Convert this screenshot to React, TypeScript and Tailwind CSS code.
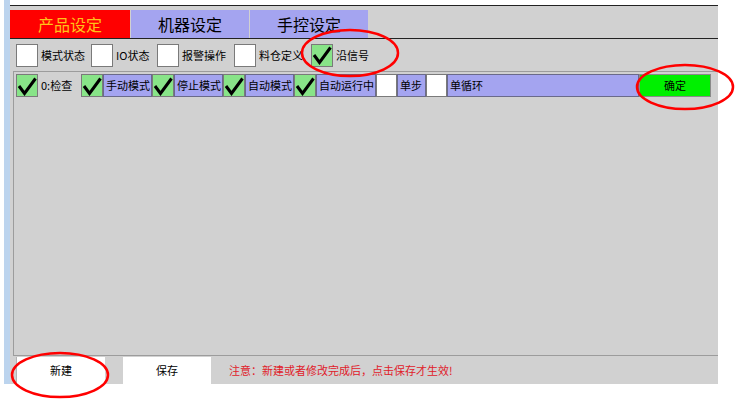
import React from "react";

const font = { fontFamily: '"Noto Sans CJK SC", "Noto Sans", sans-serif' };

function Check({ checked, w = "w-[22px]", bg = "bg-[#88e488]" }: { checked: boolean; w?: string; bg?: string }) {
  return (
    <div className={`${w} h-[23px] shrink-0 border border-[#7a7a7a] ${checked ? bg : "bg-white"} flex items-center justify-center`}>
      {checked && (
        <svg width="20" height="20" viewBox="0 0 20 20">
          <polyline points="2,10 7.5,17.5 18.5,2.5" fill="none" stroke="#000" strokeWidth="3" strokeLinejoin="miter" />
        </svg>
      )}
    </div>
  );
}

function Label({ text, w }: { text: string; w: string }) {
  return (
    <div className={`${w} h-[23px] shrink-0 border border-[#6a6a8a] bg-[#a4a4f0] flex items-center pl-[2px] text-[11px] text-black leading-none whitespace-nowrap overflow-hidden`}>
      {text}
    </div>
  );
}

export default function App() {
  const topItems = [
    { label: "模式状态", w: "w-[75px]", checked: false },
    { label: "IO状态", w: "w-[66px]", checked: false },
    { label: "报警操作", w: "w-[77px]", checked: false },
    { label: "料仓定义", w: "w-[77px]", checked: false },
    { label: "沿信号", w: "w-[80px]", checked: true },
  ];
  return (
    <div className="relative w-[737px] h-[402px] bg-white overflow-hidden" style={font}>
      <div className="flex h-[384px] pl-[4px]">
        <div className="w-[6px] bg-[#bcd4ee]" />
        <div className="flex w-[708px] flex-col">
          <div className="h-[5px] bg-white" />
          <div className="flex flex-1 flex-col bg-[#d1d1d1] border-t border-[#222]">
            {/* tabs */}
            <div className="flex pt-[4px] border-b border-[#222]">
              <div className="w-[120px] h-[28px] bg-[#ff0000] flex items-center justify-center text-[16px] text-[#ffc21a] leading-none">产品设定</div>
              <div className="ml-[1px] w-[118px] h-[28px] bg-[#a4a4f0] flex items-center justify-center text-[16px] text-black leading-none">机器设定</div>
              <div className="ml-[1px] w-[118px] h-[28px] bg-[#a4a4f0] flex items-center justify-center text-[16px] text-black leading-none">手控设定</div>
            </div>
            {/* checkbox row */}
            <div className="flex h-[32px] items-center pl-[6px]">
              {topItems.map((it) => (
                <div key={it.label} className={`${it.w} flex items-center shrink-0`}>
                  <Check checked={it.checked} />
                  <span className="ml-[3px] text-[11px] text-black leading-none whitespace-nowrap">{it.label}</span>
                </div>
              ))}
            </div>
            {/* panel */}
            <div className="ml-[3px] h-[285px] border-t border-l border-b border-[#9c9c9c] pt-[2px] pl-[2px]">
              <div className="flex items-center">
                <Check checked={true} />
                <div className="w-[43px] h-[23px] shrink-0 flex items-center pl-[3px] text-[11px] text-black leading-none">0:检查</div>
                <Check checked={true} />
                <Label text="手动模式" w="w-[49px]" />
                <Check checked={true} />
                <Label text="停止模式" w="w-[49px]" />
                <Check checked={true} />
                <Label text="自动模式" w="w-[49px]" />
                <Check checked={true} />
                <Label text="自动运行中" w="w-[60px]" />
                <Check checked={false} w="w-[21px]" />
                <Label text="单步" w="w-[29px]" />
                <Check checked={false} w="w-[21px]" />
                <Label text="单循环" w="w-[192px]" />
                <div className="w-[72px] h-[23px] shrink-0 border border-[#8a8a8a] bg-[#00f000] flex items-center justify-center text-[11px] text-black leading-none">确定</div>
              </div>
            </div>
            {/* bottom */}
            <div className="flex flex-1 items-end">
              <div className="ml-[6px] w-[89px] h-[27px] bg-white border-l border-[#b4b4b4] flex items-center justify-center text-[11px] text-black leading-none">新建</div>
              <div className="ml-[18px] w-[88px] h-[27px] bg-white flex items-center justify-center text-[11px] text-black leading-none">保存</div>
              <div className="ml-[18px] h-[27px] flex items-center text-[11px] text-[#e0202a] leading-none whitespace-nowrap">注意：新建或者修改完成后，点击保存才生效!</div>
            </div>
          </div>
        </div>
      </div>
      <svg className="absolute inset-0 pointer-events-none" width="737" height="402" viewBox="0 0 737 402">
        <ellipse cx="350" cy="53" rx="48" ry="23" fill="none" stroke="#f00" strokeWidth="2.5" />
        <ellipse cx="685" cy="87" rx="48" ry="22" fill="none" stroke="#f00" strokeWidth="2.5" />
        <ellipse cx="60" cy="375" rx="48" ry="22" fill="none" stroke="#f00" strokeWidth="2.5" />
      </svg>
    </div>
  );
}
